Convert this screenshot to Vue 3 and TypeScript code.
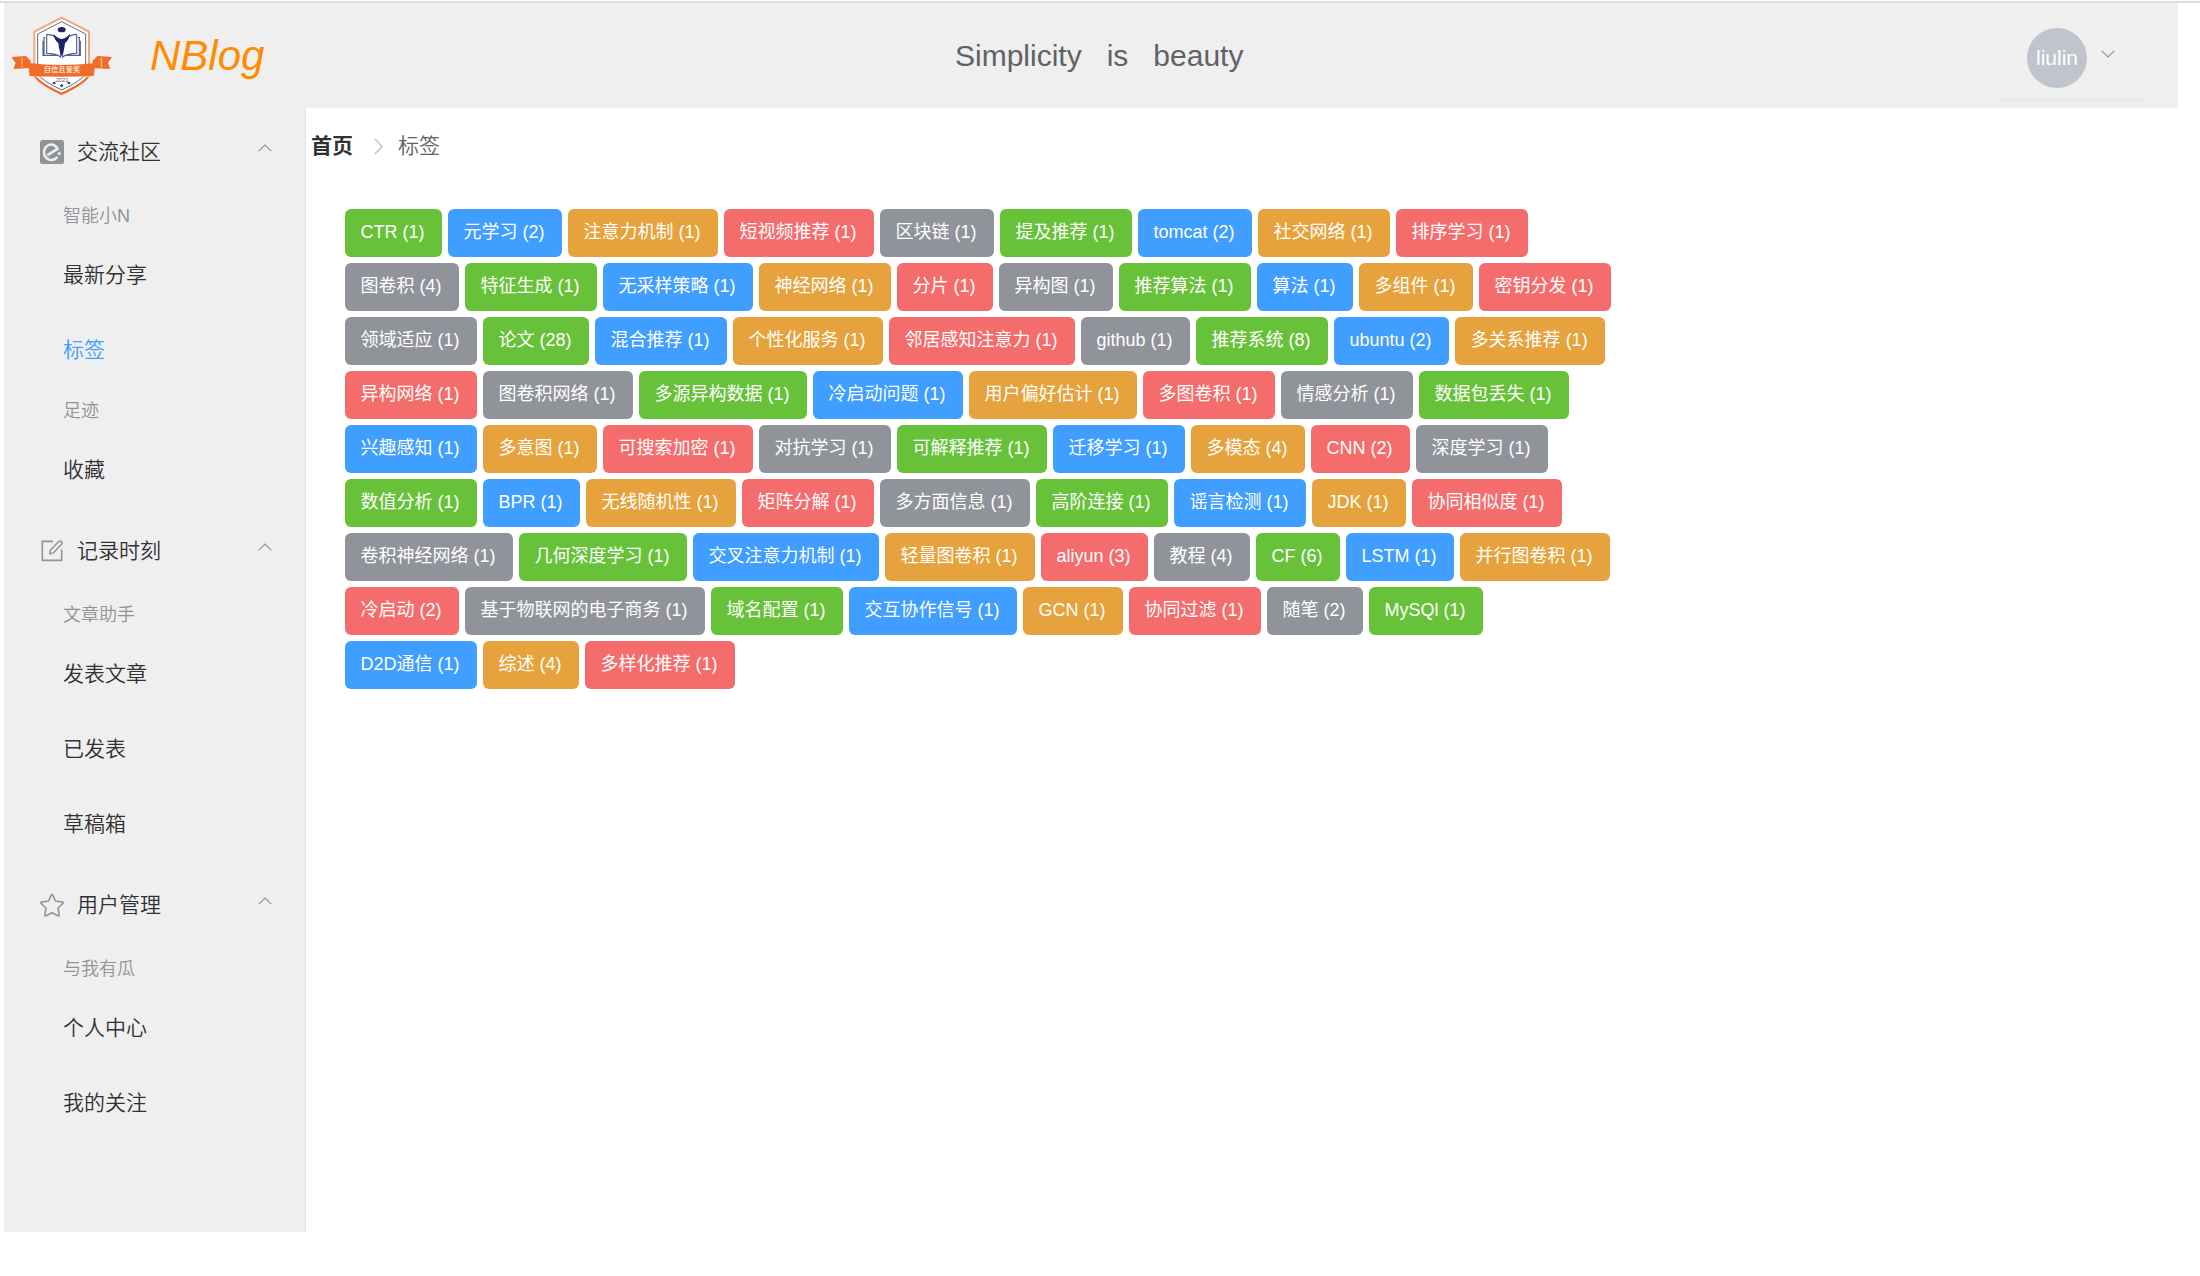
<script setup lang="ts">
type Kind = 'success' | 'primary' | 'warning' | 'danger' | 'info'

interface MenuGroup {
  title: string
  items: string[]
}

interface SubMenu {
  title: string
  icon: 'platform' | 'edit' | 'star'
  groups: MenuGroup[]
}

const active = '标签'

const menus: SubMenu[] = [
  {
    title: '交流社区',
    icon: 'platform',
    groups: [
      { title: '智能小N', items: ['最新分享', '标签'] },
      { title: '足迹', items: ['收藏'] },
    ],
  },
  {
    title: '记录时刻',
    icon: 'edit',
    groups: [{ title: '文章助手', items: ['发表文章', '已发表', '草稿箱'] }],
  },
  {
    title: '用户管理',
    icon: 'star',
    groups: [{ title: '与我有瓜', items: ['个人中心', '我的关注'] }],
  },
]

const kinds: Kind[] = ['success', 'primary', 'warning', 'danger', 'info']

const rows: string[][] = [
  ['CTR (1)', '元学习 (2)', '注意力机制 (1)', '短视频推荐 (1)', '区块链 (1)', '提及推荐 (1)', 'tomcat (2)', '社交网络 (1)', '排序学习 (1)'],
  ['图卷积 (4)', '特征生成 (1)', '无采样策略 (1)', '神经网络 (1)', '分片 (1)', '异构图 (1)', '推荐算法 (1)', '算法 (1)', '多组件 (1)', '密钥分发 (1)'],
  ['领域适应 (1)', '论文 (28)', '混合推荐 (1)', '个性化服务 (1)', '邻居感知注意力 (1)', 'github (1)', '推荐系统 (8)', 'ubuntu (2)', '多关系推荐 (1)'],
  ['异构网络 (1)', '图卷积网络 (1)', '多源异构数据 (1)', '冷启动问题 (1)', '用户偏好估计 (1)', '多图卷积 (1)', '情感分析 (1)', '数据包丢失 (1)'],
  ['兴趣感知 (1)', '多意图 (1)', '可搜索加密 (1)', '对抗学习 (1)', '可解释推荐 (1)', '迁移学习 (1)', '多模态 (4)', 'CNN (2)', '深度学习 (1)'],
  ['数值分析 (1)', 'BPR (1)', '无线随机性 (1)', '矩阵分解 (1)', '多方面信息 (1)', '高阶连接 (1)', '谣言检测 (1)', 'JDK (1)', '协同相似度 (1)'],
  ['卷积神经网络 (1)', '几何深度学习 (1)', '交叉注意力机制 (1)', '轻量图卷积 (1)', 'aliyun (3)', '教程 (4)', 'CF (6)', 'LSTM (1)', '并行图卷积 (1)'],
  ['冷启动 (2)', '基于物联网的电子商务 (1)', '域名配置 (1)', '交互协作信号 (1)', 'GCN (1)', '协同过滤 (1)', '随笔 (2)', 'MySQl (1)'],
  ['D2D通信 (1)', '综述 (4)', '多样化推荐 (1)'],
]

// The colours cycle through the whole list, across row boundaries.
let position = 0
const tagRows = rows.map((row) => row.map((label) => ({ label, kind: kinds[position++ % kinds.length] })))
</script>

<template>
  <div class="page">
    <header class="header">
      <svg class="logo" viewBox="0 0 318 258" width="106" height="86">
        <path d="M10 135L54 132L68 146L66 168L16 171L23 153Z M312 135L268 132L254 146L254 168L307 171L300 153Z" fill="#f06c28" />
        <path d="M42 137V166M280 137V166" stroke="#f9b58f" stroke-width="4" />
        <path d="M161 17L243 59V191Q230 213 161 247Q92 213 79 191V59Z" fill="#fff" stroke="#f4a877" stroke-width="6" />
        <path d="M84 196Q100 217 161 245Q222 217 238 196" fill="none" stroke="#f06c28" stroke-width="6" />
        <path d="M161 29L233 66V186Q220 206 161 234Q102 206 89 186V66Z" fill="#fff" stroke="#5b6a91" stroke-width="3" />
        <path d="M116 67V124Q145 124 158 135V88Q140 67 116 67M112 77H108V130H153M105 86V132M206 67V124Q177 124 164 135V88Q182 67 206 67M210 77H214V130H169M217 86V132" fill="none" stroke="#52638f" stroke-width="3.5" />
        <path d="M136 65Q147 79 161 81Q175 79 186 65Q184 82 171 94Q169 110 166 121L161 132L156 121Q153 110 151 94Q138 82 136 65Z" fill="#1d2269" />
        <ellipse cx="161" cy="53" rx="12" ry="8" fill="#1d2269" />
        <path d="M60 153Q161 165 262 153L257 192Q161 197 65 192Z" fill="#f06c28" />
        <text x="162" y="181" class="logo-motto">自信且爱笑</text>
        <text x="162" y="209" class="logo-year">2021</text>
        <path d="M134 213h9M178 213h9M156 221h10M161 216v10M139 209v8M183 209v8" stroke="#33457d" stroke-width="4" />
      </svg>
      <h1 class="brand">NBlog</h1>
      <div class="slogan"><span>Simplicity</span><span>is</span><span>beauty</span></div>
      <div class="account">
        <span class="avatar">liulin</span>
        <svg class="caret" viewBox="0 0 14 8" width="14" height="8"><path d="M.7 .9L7 6.9L13.3 .9" /></svg>
      </div>
    </header>

    <div class="body">
      <aside class="sidebar">
        <section v-for="menu in menus" :key="menu.title">
          <div class="submenu-title">
            <svg v-if="menu.icon === 'platform'" class="icon" viewBox="0 0 24 24">
              <rect width="24" height="24" rx="2.5" fill="#909399" />
              <path d="M8.2 14.6L17.6 8.9C15.6 4.4 10.4 3.2 6.7 6.3C3 9.6 3.2 15.6 7 18.5C10 20.8 14.2 20.4 16.8 17.6" fill="none" stroke="#efefef" stroke-width="2.5" stroke-linejoin="round" stroke-linecap="round" />
              <circle cx="19.3" cy="13.5" r="1.5" fill="#efefef" />
            </svg>
            <svg v-else-if="menu.icon === 'edit'" class="icon" viewBox="0 0 24 24">
              <path d="M13 2.4H2.3V21.4H21.7V10.5" fill="none" stroke="#909399" stroke-width="1.6" />
              <path d="M9.8 14.9L10.2 11.4L18.7 2.5Q19.8 1.4 21.2 2.4Q22.8 3.6 21.7 5L13.3 13.9Z" fill="none" stroke="#909399" stroke-width="1.5" stroke-linejoin="round" />
            </svg>
            <svg v-else class="icon" viewBox="0 0 24 24">
              <path d="M12 1.5Q12.5 1.5 12.9 2.3L15.5 8L22.3 9Q23.7 9.4 22.7 10.5L18 15.2L19.2 21.8Q19.2 23.2 17.9 22.8L12 19.7L6.1 22.8Q4.8 23.2 4.8 21.8L6 15.2L1.3 10.5Q.3 9.4 1.7 9L8.5 8L11.1 2.3Q11.5 1.5 12 1.5Z" fill="none" stroke="#909399" stroke-width="1.6" stroke-linejoin="round" />
            </svg>
            <span>{{ menu.title }}</span>
            <svg class="caret" viewBox="0 0 14 8" width="14" height="8"><path d="M.7 7.1L7 1.1L13.3 7.1" /></svg>
          </div>
          <div v-for="group in menu.groups" :key="group.title">
            <div class="group-title">{{ group.title }}</div>
            <div v-for="item in group.items" :key="item" class="item" :class="{ active: item === active }">{{ item }}</div>
          </div>
        </section>
      </aside>

      <main class="main">
        <nav class="breadcrumb">
          <b>首页</b>
          <svg viewBox="0 0 9 17" width="9" height="17"><path d="M.8 .8L8 8.5L.8 16.2" /></svg>
          <span>标签</span>
        </nav>
        <div class="tags">
          <div v-for="(row, index) in tagRows" :key="index" class="tag-row">
            <span v-for="tag in row" :key="tag.label" class="tag" :class="tag.kind">{{ tag.label }}</span>
          </div>
        </div>
      </main>
    </div>
  </div>
</template>

<style>
body {
  background: #fff;
}
</style>

<style scoped>
.page {
  box-sizing: border-box;
  height: 1276px;
  padding-top: 1px;
  font-family: 'Liberation Sans', 'Noto Sans CJK SC', sans-serif;
  color: #303133;
  overflow: hidden;
}

.page::before {
  content: '';
  display: block;
  height: 2px;
  background: #dadce3;
}

.header {
  display: flex;
  box-sizing: border-box;
  width: 2174px;
  height: 105px;
  margin-left: 4px;
  padding: 9px 31px 0 4px;
  background: #efefef;
}

.logo {
  flex: none;
}

.logo-motto {
  font-size: 22px;
  font-weight: 700;
  text-anchor: middle;
  fill: #fbd9c2;
}

.logo-year {
  font-size: 17px;
  text-anchor: middle;
  fill: #5c6272;
}

.brand {
  width: 805px;
  margin: 20px 0 0 36px;
  font-size: 42px;
  font-weight: 400;
  font-style: italic;
  line-height: 48px;
  color: #ff8c00;
}

.slogan {
  display: flex;
  gap: 25px;
  margin-top: 27px;
  font-size: 30px;
  line-height: 34px;
  color: #606266;
}

.account {
  display: flex;
  align-items: center;
  box-sizing: border-box;
  width: 150px;
  height: 89px;
  margin-left: auto;
  padding: 3px 0 0 30px;
  border-bottom: 1px solid #e6e6e6;
}

.account .caret {
  margin: -7px 0 0 14px;
}

.avatar {
  width: 60px;
  height: 60px;
  border-radius: 50%;
  background: #c0c4cc;
  color: #fff;
  font-size: 21px;
  line-height: 60px;
  text-align: center;
}

.caret path {
  fill: none;
  stroke: #909399;
  stroke-width: 1.3;
}

.body {
  display: flex;
  margin-left: 4px;
}

.sidebar {
  box-sizing: border-box;
  width: 302px;
  height: 1124px;
  border-right: 1px solid #e2e2e2;
  background: #efefef;
}

.submenu-title {
  display: flex;
  align-items: center;
  height: 84px;
  padding: 3px 33px 0 36px;
  box-sizing: border-box;
  font-size: 21px;
}

.submenu-title .icon {
  width: 24px;
  height: 24px;
  margin-right: 13px;
}

.submenu-title .caret {
  margin: -7px 0 0 auto;
}

.submenu-title span {
  font-weight: 350;
  line-height: 30px;
}

.group-title {
  box-sizing: border-box;
  height: 45px;
  padding: 11px 0 0 59px;
  font-size: 18px;
  font-weight: 350;
  line-height: 27px;
  color: #909399;
}

.item {
  height: 75px;
  padding-left: 59px;
  font-size: 21px;
  font-weight: 350;
  line-height: 75px;
}

.item.active {
  color: #409eff;
}

.main {
  flex: 1;
  padding: 23px 0 0 5px;
}

.breadcrumb {
  display: flex;
  align-items: center;
  height: 30px;
  font-size: 21px;
  line-height: 30px;
}

.breadcrumb svg {
  margin: 0 15px 0 21px;
}

.breadcrumb svg path {
  fill: none;
  stroke: #c0c4cc;
  stroke-width: 1.5;
}

.breadcrumb span {
  font-weight: 350;
  color: #606266;
}

.tags {
  display: flex;
  flex-direction: column;
  gap: 6px;
  margin: 48px 0 0 34px;
}

.tag-row {
  display: flex;
  gap: 6px;
}

.tag {
  box-sizing: border-box;
  height: 48px;
  padding: 0 17.5px 0 15.5px;
  border-radius: 6px;
  color: #fff;
  font-size: 18px;
  line-height: 46px;
  white-space: nowrap;
}

.success {
  background: #67c23a;
}

.primary {
  background: #409eff;
}

.warning {
  background: #e6a23c;
}

.danger {
  background: #f56c6c;
}

.info {
  background: #909399;
}
</style>
